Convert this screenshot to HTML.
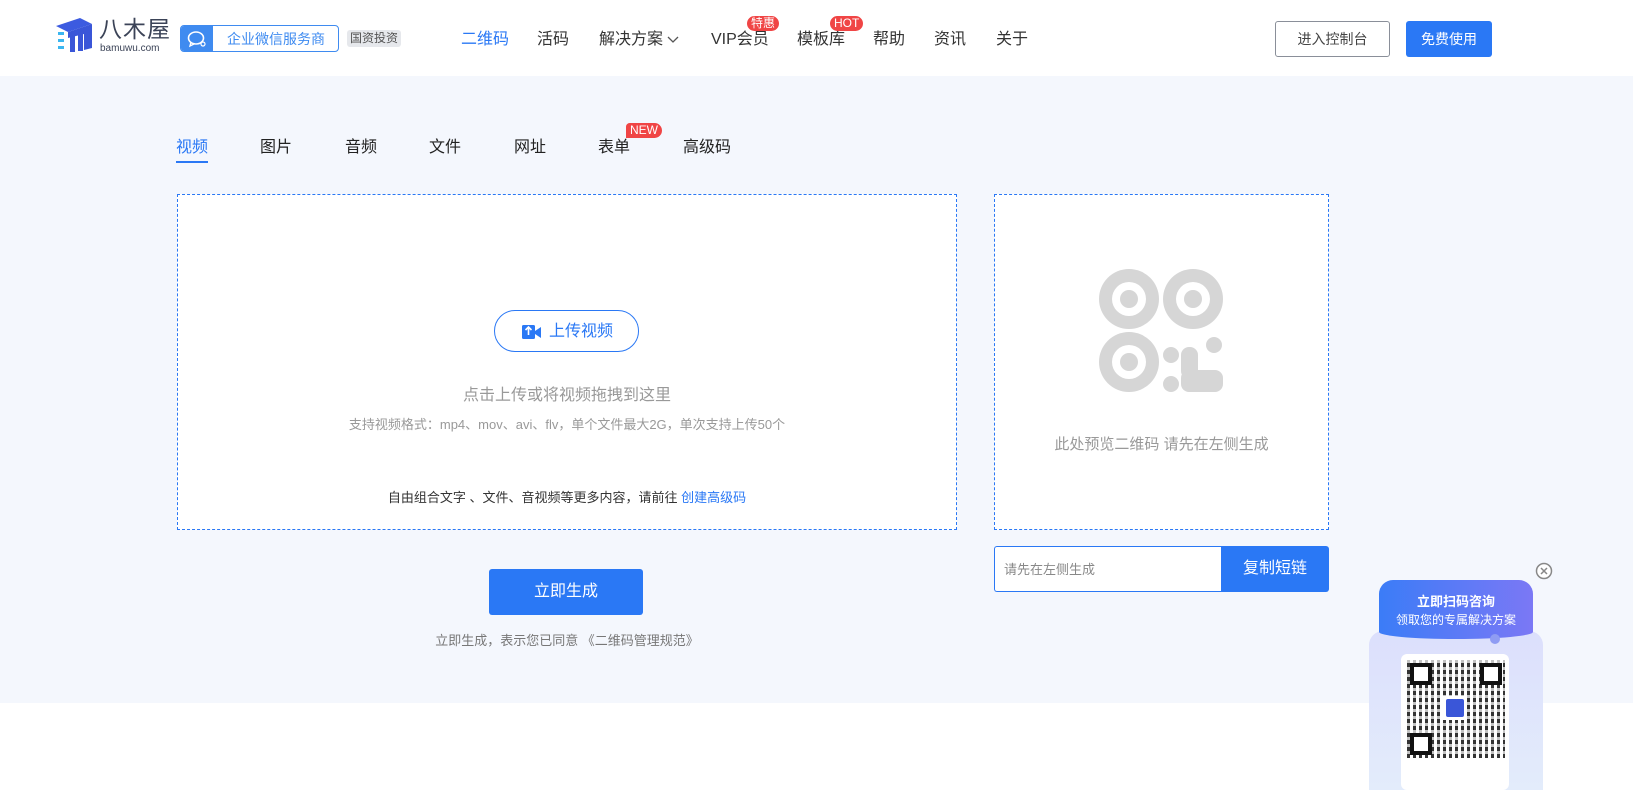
<!DOCTYPE html>
<html><head><meta charset="utf-8"><style>
*{margin:0;padding:0;box-sizing:border-box}
body{width:1633px;height:790px;overflow:hidden;background:#fff;font-family:"Liberation Sans","Noto Sans CJK SC",sans-serif;position:relative;color:#333;line-height:1.2}
.a{position:absolute}
.nav{font-size:16px;color:#333;top:30px;line-height:20px}
.badge{background:#f04545;color:#fff;font-size:12px;border-radius:8px;padding:0 4px;line-height:15px}
.tab{top:138px;font-size:16px;color:#222;line-height:20px}
</style></head><body>
<div class="a" style="left:0;top:0;width:1633px;height:76px;background:#fff"></div>
<svg class="a" style="left:54px;top:18px" width="40" height="34" viewBox="0 0 40 34">
<polygon points="2,8 26,0 38,6 14,14" fill="#3c5be0"/>
<polygon points="14,14 38,6 38,30 30,32 30,16 14,20" fill="#3a56d8"/>
<rect x="16" y="18" width="5" height="16" fill="#3a56d8"/><rect x="24" y="16" width="5" height="17" fill="#3a56d8"/>
<rect x="4" y="14" width="6" height="3" fill="#3bb6f0"/><rect x="4" y="21" width="6" height="3" fill="#3bb6f0"/><rect x="4" y="28" width="6" height="3" fill="#3bb6f0"/>
</svg>
<div class="a" style="left:99px;top:17px;font-size:23px;line-height:24px;color:#3b4357;letter-spacing:1px">八木屋</div>
<div class="a" style="left:100px;top:43px;font-size:10px;line-height:11px;color:#3b4357">bamuwu.com</div>
<div class="a" style="left:180px;top:25px;width:159px;height:27px;border:1px solid #3f8bf0;border-radius:4px;overflow:hidden">
<div class="a" style="left:0;top:0;width:32px;height:27px;background:#3f8bf0"></div>
<svg class="a" style="left:6px;top:4px" width="20" height="18" viewBox="0 0 20 18"><ellipse cx="9" cy="8" rx="7.5" ry="6" fill="none" stroke="#fff" stroke-width="1.6"/><path d="M4 12 L3 16 L8 13.5" fill="none" stroke="#fff" stroke-width="1.4"/><circle cx="16" cy="14" r="2" fill="none" stroke="#fff" stroke-width="1.2"/></svg>
<div class="a" style="left:46px;top:5px;font-size:14px;line-height:17px;color:#3f8bf0">企业微信服务商</div></div>
<div class="a" style="left:347px;top:30px;background:#e6e8ec;border-radius:3px;font-size:12px;line-height:15px;color:#555;padding:1px 3px">国资投资</div>
<div class="a nav" style="left:461px;color:#2a78f5">二维码</div>
<div class="a nav" style="left:537px">活码</div>
<div class="a nav" style="left:599px">解决方案</div>
<svg class="a" style="left:667px;top:36px" width="12" height="8"><path d="M1 1 L6 6 L11 1" fill="none" stroke="#555" stroke-width="1.3"/></svg>
<div class="a nav" style="left:711px">VIP会员</div>
<div class="a badge" style="left:747px;top:16px">特惠</div>
<div class="a nav" style="left:797px">模板库</div>
<div class="a badge" style="left:830px;top:16px">HOT</div>
<div class="a nav" style="left:873px">帮助</div>
<div class="a nav" style="left:934px">资讯</div>
<div class="a nav" style="left:996px">关于</div>
<div class="a" style="left:1275px;top:21px;width:115px;height:36px;border:1px solid #8a8f99;border-radius:3px;text-align:center;line-height:34px;font-size:14px;color:#444">进入控制台</div>
<div class="a" style="left:1406px;top:21px;width:86px;height:36px;background:#2a78f5;border-radius:3px;text-align:center;line-height:36px;font-size:14px;color:#fff">免费使用</div>
<div class="a" style="left:0;top:76px;width:1633px;height:627px;background:#f4f7fd"></div>
<div class="a tab" style="left:176px;color:#2a78f5">视频</div>
<div class="a" style="left:176px;top:161px;width:32px;height:2px;background:#2a78f5"></div>
<div class="a tab" style="left:260px">图片</div>
<div class="a tab" style="left:345px">音频</div>
<div class="a tab" style="left:429px">文件</div>
<div class="a tab" style="left:514px">网址</div>
<div class="a tab" style="left:598px">表单</div>
<div class="a badge" style="left:626px;top:123px;border-radius:4px 8px 8px 0">NEW</div>
<div class="a tab" style="left:683px">高级码</div>
<div class="a" style="left:177px;top:194px;width:780px;height:336px;border:1px dashed #2a78f5;background:#fff"></div>
<div class="a" style="left:494px;top:310px;width:145px;height:42px;border:1px solid #2a78f5;border-radius:21px;background:#fff"></div>
<svg class="a" style="left:522px;top:322px" width="20" height="18" viewBox="0 0 20 18"><rect x="0" y="3" width="13" height="14" rx="1.5" fill="#2a78f5"/><polygon points="13,9 19,5 19,16 13,12" fill="#2a78f5"/><path d="M6.5 13 V5 M3.5 8 L6.5 5 L9.5 8" stroke="#fff" stroke-width="1.6" fill="none"/></svg>
<div class="a" style="left:549px;top:322px;font-size:16px;line-height:20px;color:#2a78f5">上传视频</div>
<div class="a" style="left:0;width:1134px;top:386px;text-align:center;font-size:16px;line-height:20px;color:#999">点击上传或将视频拖拽到这里</div>
<div class="a" style="left:0;width:1134px;top:417px;text-align:center;font-size:13px;line-height:16px;color:#999">支持视频格式：mp4、mov、avi、flv，单个文件最大2G，单次支持上传50个</div>
<div class="a" style="left:0;width:1134px;top:490px;text-align:center;font-size:13px;line-height:16px;color:#333">自由组合文字 、文件、音视频等更多内容，请前往 <span style="color:#2a78f5">创建高级码</span></div>
<div class="a" style="left:489px;top:569px;width:154px;height:46px;background:#2a78f5;border-radius:3px;color:#fff;font-size:16px;text-align:center;line-height:46px">立即生成</div>
<div class="a" style="left:0;width:1134px;top:633px;text-align:center;font-size:13px;line-height:16px;color:#777">立即生成，表示您已同意 《二维码管理规范》</div>
<div class="a" style="left:994px;top:194px;width:335px;height:336px;border:1px dashed #2a78f5;background:#fff"></div>
<svg class="a" style="left:1096px;top:268px" width="130" height="130" viewBox="1096 268 130 130" fill="#d6d6d6">
<circle cx="1129" cy="299" r="30"/><circle cx="1129" cy="299" r="17" fill="#fff"/><circle cx="1129" cy="299" r="9"/>
<circle cx="1193" cy="299" r="30"/><circle cx="1193" cy="299" r="17" fill="#fff"/><circle cx="1193" cy="299" r="9"/>
<circle cx="1129" cy="362" r="30"/><circle cx="1129" cy="362" r="17" fill="#fff"/><circle cx="1129" cy="362" r="9"/>
<circle cx="1171" cy="355" r="8"/><rect x="1181" y="347" width="17" height="32" rx="8"/><circle cx="1214" cy="345" r="8"/><circle cx="1171" cy="384" r="8"/><rect x="1181" y="370" width="42" height="22" rx="8"/>
</svg>
<div class="a" style="left:994px;width:335px;top:436px;text-align:center;font-size:15px;line-height:18px;color:#999">此处预览二维码 请先在左侧生成</div>
<div class="a" style="left:994px;top:546px;width:227px;height:46px;border:1px solid #2a78f5;border-right:none;background:#fff;border-radius:3px 0 0 3px;font-size:13px;line-height:16px;color:#888;padding:15px 0 0 9px">请先在左侧生成</div>
<div class="a" style="left:1221px;top:546px;width:108px;height:46px;background:#2a78f5;border-radius:0 3px 3px 0;color:#fff;font-size:16px;text-align:center;line-height:46px">复制短链</div>
<svg class="a" style="left:1535px;top:562px" width="18" height="18"><circle cx="9" cy="9" r="7.5" fill="#fff" stroke="#888" stroke-width="1.5"/><path d="M6 6 L12 12 M12 6 L6 12" stroke="#888" stroke-width="1.5"/></svg>
<div class="a" style="left:1379px;top:580px;width:154px;height:70px;border-radius:14px 14px 0 0;background:linear-gradient(90deg,#3b7cf7,#7b78f5)"></div>
<div class="a" style="left:1379px;width:154px;top:594px;text-align:center;color:#fff;font-size:13px;line-height:16px;font-weight:bold">立即扫码咨询</div>
<div class="a" style="left:1379px;width:154px;top:613px;text-align:center;color:#fff;font-size:12px;line-height:15px">领取您的专属解决方案</div>
<div class="a" style="left:1369px;top:631px;width:174px;height:159px;border-radius:14px 14px 0 0;background:linear-gradient(180deg,#dcdffc,#e3ecfb)"></div>
<div class="a" style="left:1379px;top:625px;width:154px;height:14px;background:linear-gradient(90deg,#3b7cf7,#7b78f5);border-radius:0 0 50% 50%"></div>
<div class="a" style="left:1490px;top:634px;width:10px;height:10px;border-radius:5px;background:#8f9cf3"></div>
<div class="a" style="left:1401px;top:654px;width:108px;height:136px;background:#fff;border-radius:6px"></div>
<div class="a" style="left:1407px;top:660px;width:98px;height:98px;background:repeating-linear-gradient(90deg,#111 0 3px,#fff 3px 6px),#111;opacity:.85"></div>
<div class="a" style="left:1407px;top:660px;width:98px;height:98px;background:repeating-linear-gradient(0deg,transparent 0 4px,rgba(255,255,255,.7) 4px 7px)"></div>
<div class="a" style="left:1410px;top:663px;width:22px;height:22px;border:4px solid #111;background:#fff"></div>
<div class="a" style="left:1480px;top:663px;width:22px;height:22px;border:4px solid #111;background:#fff"></div>
<div class="a" style="left:1410px;top:733px;width:22px;height:22px;border:4px solid #111;background:#fff"></div>
<div class="a" style="left:1443px;top:696px;width:24px;height:24px;background:#fff"></div>
<div class="a" style="left:1446px;top:699px;width:18px;height:18px;background:#3a56d8;border-radius:2px"></div>
</body></html>
